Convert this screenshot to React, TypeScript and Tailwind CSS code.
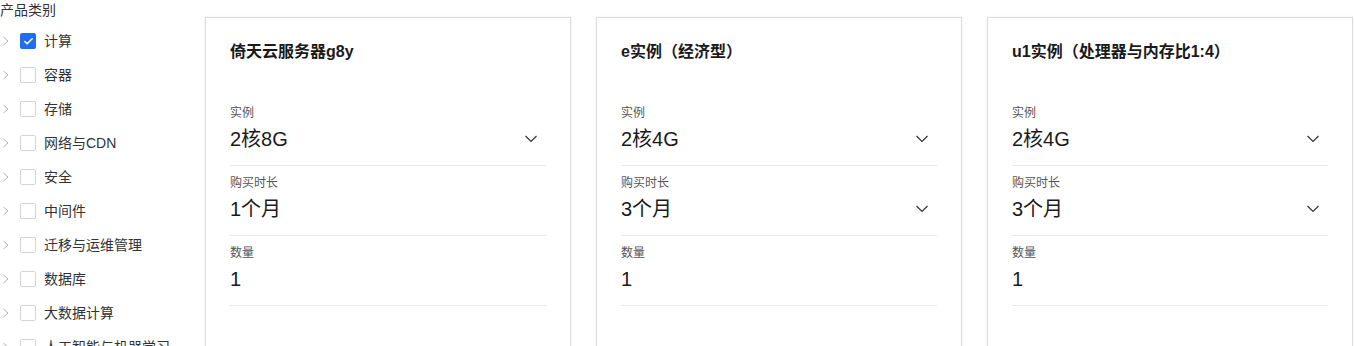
import { Check } from 'lucide-react'

const categories = [
  { name: '计算', checked: true },
  { name: '容器' },
  { name: '存储' },
  { name: '网络与CDN' },
  { name: '安全' },
  { name: '中间件' },
  { name: '迁移与运维管理' },
  { name: '数据库' },
  { name: '大数据计算' },
  { name: '人工智能与机器学习' },
]

type Field = { label: string; value: string; select?: boolean }

const products: { title: string; fields: Field[] }[] = [
  {
    title: '倚天云服务器g8y',
    fields: [
      { label: '实例', value: '2核8G', select: true },
      { label: '购买时长', value: '1个月' },
      { label: '数量', value: '1' },
    ],
  },
  {
    title: 'e实例（经济型）',
    fields: [
      { label: '实例', value: '2核4G', select: true },
      { label: '购买时长', value: '3个月', select: true },
      { label: '数量', value: '1' },
    ],
  },
  {
    title: 'u1实例（处理器与内存比1:4）',
    fields: [
      { label: '实例', value: '2核4G', select: true },
      { label: '购买时长', value: '3个月', select: true },
      { label: '数量', value: '1' },
    ],
  },
]

function Sidebar() {
  return (
    <aside className="w-[205px] shrink-0">
      <div className="text-[14px] leading-[20px] text-[#333]">产品类别</div>
      <ul className="mt-1">
        {categories.map(({ name, checked }) => (
          <li key={name} className="flex h-[34px] items-center">
            {/* expand arrow */}
            <svg width="8" height="10" viewBox="0 0 8 10" className="ml-[2px] shrink-0">
              <polyline points="1.5,1 6,5 1.5,9" fill="none" stroke="#b0b0b0" strokeWidth="1" />
            </svg>
            <span
              className={
                checked
                  ? 'ml-[10px] flex size-[16px] items-center justify-center rounded-[2px] bg-[#1f6ef0]'
                  : 'ml-[10px] size-[16px] rounded-[2px] border border-[#d4d4d4] bg-white'
              }
            >
              {checked && <Check className="size-[11px] text-white" strokeWidth={3.5} />}
            </span>
            <span className="ml-[8px] whitespace-nowrap text-[14px] text-[#333]">{name}</span>
          </li>
        ))}
      </ul>
    </aside>
  )
}

function ProductCard({ title, fields }: { title: string; fields: Field[] }) {
  return (
    <div className="h-[360px] w-[366px] shrink-0 border border-[#dcdcdc] bg-white px-[24px] pt-[23px] shadow-[0_0_3px_rgba(0,0,0,0.06)]">
      <h3 className="text-[16px] font-bold leading-[22px] text-[#1a1a1a]">{title}</h3>
      <div className="mt-[33px]">
        {fields.map(({ label, value, select }) => (
          <div key={label} className="border-b border-[#e8e8e8] pt-[9px] pb-[12px]">
            <div className="text-[12px] leading-[17px] text-[#555]">{label}</div>
            <div className="mt-[3px] flex items-center justify-between">
              <span className="text-[20px] leading-[28px] text-[#1a1a1a]">{value}</span>
              {select && (
                <svg width="12" height="8" viewBox="0 0 12 8" className="mr-[9px]">
                  <polyline points="0.5,1 6,6.5 11.5,1" fill="none" stroke="#333" strokeWidth="1.2" />
                </svg>
              )}
            </div>
          </div>
        ))}
      </div>
    </div>
  )
}

export default function App() {
  return (
    <div
      className="flex bg-white"
      style={{ fontFamily: '"Liberation Sans", "Noto Sans CJK SC", sans-serif' }}
    >
      <Sidebar />
      <div className="flex gap-[25px] pt-[17px]">
        {products.map((p) => (
          <ProductCard key={p.title} {...p} />
        ))}
      </div>
    </div>
  )
}
